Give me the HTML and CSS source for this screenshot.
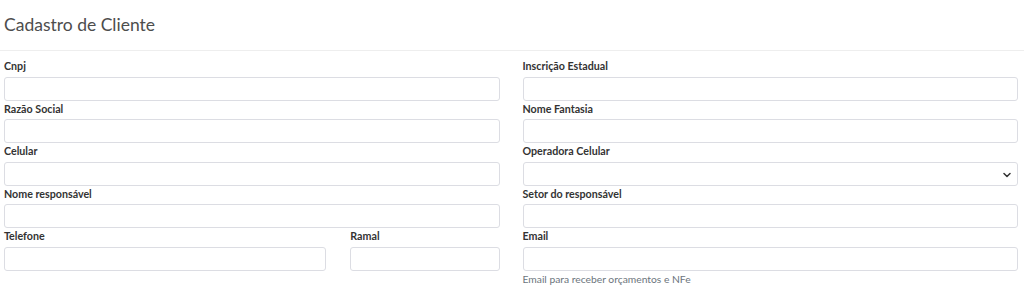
FILE: index.html
```html
<!DOCTYPE html>
<html lang="pt-BR">
<head>
  <meta charset="UTF-8" />
  <meta name="viewport" content="width=device-width, initial-scale=1.0"/>
  <title>Cadastro de Cliente</title>
  <link rel="stylesheet" href="styles.css">
</head>
<body>
  <div class="page-header">
    <h1>Cadastro de Cliente</h1>
  </div>

  <form class="cliente-form">
    <div class="col">
      <div class="field">
        <label for="cnpj">Cnpj</label>
        <input type="text" id="cnpj">
      </div>
      <div class="field">
        <label for="razao">Razão Social</label>
        <input type="text" id="razao">
      </div>
      <div class="field">
        <label for="celular">Celular</label>
        <input type="text" id="celular">
      </div>
      <div class="field">
        <label for="responsavel">Nome responsável</label>
        <input type="text" id="responsavel">
      </div>
      <div class="split">
        <div class="field">
          <label for="telefone">Telefone</label>
          <input type="text" id="telefone">
        </div>
        <div class="field">
          <label for="ramal">Ramal</label>
          <input type="text" id="ramal">
        </div>
      </div>
    </div>

    <div class="col">
      <div class="field">
        <label for="ie">Inscrição Estadual</label>
        <input type="text" id="ie">
      </div>
      <div class="field">
        <label for="fantasia">Nome Fantasia</label>
        <input type="text" id="fantasia">
      </div>
      <div class="field">
        <label for="operadora">Operadora Celular</label>
        <div class="select-wrap">
          <select id="operadora">
            <option></option>
          </select>
          <svg class="chevron" width="8" height="6" viewBox="0 0 8 6">
            <path d="M1 1.5l3 3 3-3" fill="none" stroke="#333" stroke-width="1.5" stroke-linecap="round" stroke-linejoin="round"/>
          </svg>
        </div>
      </div>
      <div class="field">
        <label for="setor">Setor do responsável</label>
        <input type="text" id="setor">
      </div>
      <div class="field">
        <label for="email">Email</label>
        <input type="text" id="email">
        <small class="help">Email para receber orçamentos e NFe</small>
      </div>
    </div>
  </form>
</body>
</html>
```

FILE: styles.css
```css
* {
  margin: 0;
  padding: 0;
  box-sizing: border-box;
}

body {
  background: #ffffff;
  color: #333333;
  font-family: Lato, "Open Sans", sans-serif;
}

.page-header {
  height: 51px;
  padding: 0 4px;
  border-bottom: 1px solid #eeeeee;
}

.page-header h1 {
  font-size: 17.5px;
  font-weight: 400;
  line-height: 50px;
  color: #4d4d4d;
}

.cliente-form {
  display: grid;
  grid-template-columns: 1fr 1fr;
  column-gap: 23px;
  padding: 7px 6px 0 4px;
}

.split {
  display: grid;
  grid-template-columns: 322fr 149fr;
  column-gap: 24px;
}

.field label {
  display: block;
  font-size: 10.7px;
  font-weight: 700;
  line-height: 15px;
  margin-bottom: 3.5px;
  color: #333333;
}

.field input,
.field select {
  display: block;
  width: 100%;
  height: 24px;
  border: 1px solid #dcdde3;
  border-radius: 3px;
  background: #ffffff;
  font: inherit;
  outline: none;
}

.select-wrap {
  position: relative;
}

.field select {
  appearance: none;
  -webkit-appearance: none;
}

.chevron {
  position: absolute;
  right: 7px;
  top: 10px;
  pointer-events: none;
}

.help {
  display: block;
  margin-top: 2px;
  font-size: 10.3px;
  line-height: 13px;
  color: #6c757d;
}
```
